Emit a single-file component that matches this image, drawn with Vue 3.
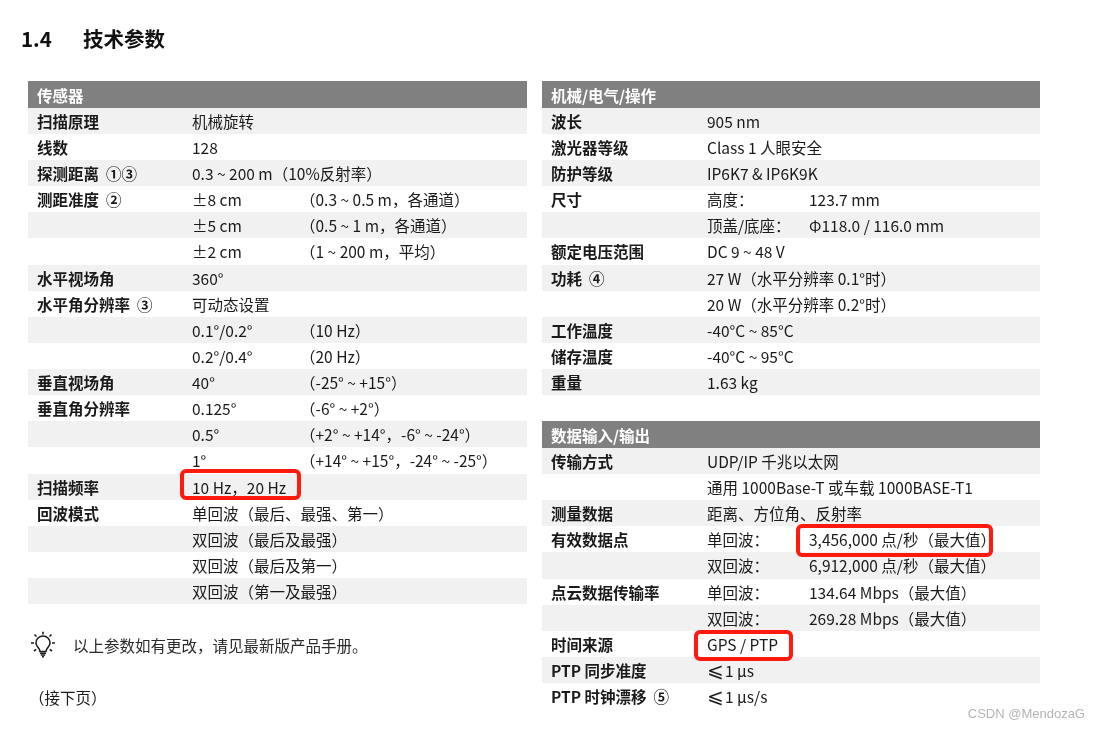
<script setup>
const sensor = [
  ['扫描原理', '机械旋转'],
  ['线数', '128'],
  ['探测距离', '0.3 ~ 200 m（10%反射率）', '', '①③'],
  ['测距准度', '±8 cm', '（0.3 ~ 0.5 m，各通道）', '②'],
  ['', '±5 cm', '（0.5 ~ 1 m，各通道）'],
  ['', '±2 cm', '（1 ~ 200 m，平均）'],
  ['水平视场角', '360°'],
  ['水平角分辨率', '可动态设置', '', '③'],
  ['', '0.1°/0.2°', '（10 Hz）'],
  ['', '0.2°/0.4°', '（20 Hz）'],
  ['垂直视场角', '40°', '（-25° ~ +15°）'],
  ['垂直角分辨率', '0.125°', '（-6° ~ +2°）'],
  ['', '0.5°', '（+2° ~ +14°，-6° ~ -24°）'],
  ['', '1°', '（+14° ~ +15°，-24° ~ -25°）'],
  ['扫描频率', '10 Hz，20 Hz'],
  ['回波模式', '单回波（最后、最强、第一）'],
  ['', '双回波（最后及最强）'],
  ['', '双回波（最后及第一）'],
  ['', '双回波（第一及最强）'],
]
const mech = [
  ['波长', '905 nm'],
  ['激光器等级', 'Class 1 人眼安全'],
  ['防护等级', 'IP6K7 & IP6K9K'],
  ['尺寸', '高度：', '123.7 mm'],
  ['', '顶盖/底座：', 'Φ118.0 / 116.0 mm'],
  ['额定电压范围', 'DC 9 ~ 48 V'],
  ['功耗', '27 W（水平分辨率 0.1°时）', '', '④'],
  ['', '20 W（水平分辨率 0.2°时）'],
  ['工作温度', '-40°C ~ 85°C'],
  ['储存温度', '-40°C ~ 95°C'],
  ['重量', '1.63 kg'],
]
const data = [
  ['传输方式', 'UDP/IP 千兆以太网'],
  ['', '通用 1000Base-T 或车载 1000BASE-T1'],
  ['测量数据', '距离、方位角、反射率'],
  ['有效数据点', '单回波：', '3,456,000 点/秒（最大值）'],
  ['', '双回波：', '6,912,000 点/秒（最大值）'],
  ['点云数据传输率', '单回波：', '134.64 Mbps（最大值）'],
  ['', '双回波：', '269.28 Mbps（最大值）'],
  ['时间来源', 'GPS / PTP'],
  ['PTP 同步准度', '1 µs', '', '', '⩽'],
  ['PTP 时钟漂移', '1 µs/s', '', '⑤', '⩽'],
]
const sections = [
  { title: '机械/电气/操作', rows: mech },
  { title: '数据输入/输出', rows: data },
]
</script>

<template>
  <div class="page">
    <h1 class="title"><span class="num">1.4</span>技术参数</h1>
    <div class="columns">
      <div class="col">
        <section class="table">
          <div class="head">传感器</div>
          <div v-for="(r, i) in sensor" :key="i" class="row left-row">
            <b>{{ r[0] }}<span v-if="r[3]" class="circ">{{ r[3] }}</span></b><span>{{ r[1] }}</span><span v-if="r[2]" class="paren">{{ r[2] }}</span>
          </div>
        </section>
        <div class="note">
          <svg class="bulb" width="28" height="28" viewBox="0 0 28 28" fill="none" stroke="#1c1c1c" stroke-width="1.600">
            <path d="M11 20.500c0-3.500-4-4.500-4-8.500a7 7 0 0 1 14 0c0 4-4 5-4 8.500z" />
            <path d="M11 22.200h6M11.800 24h4.400M13 25.800h2M14 .8v2.700M5.500 3.500l2 2M22.500 3.500l-2 2M2 12h3M23 12h3M5 20l2.200-1.700M23 20l-2.200-1.700" />
          </svg>
          <span>以上参数如有更改，请见最新版产品手册。</span>
        </div>
        <div class="cont">（接下页）</div>
      </div>
      <div class="col">
        <section v-for="s in sections" :key="s.title" class="table stacked">
          <div class="head">{{ s.title }}</div>
          <div v-for="(r, i) in s.rows" :key="i" class="row right-row">
            <b>{{ r[0] }}<span v-if="r[3]" class="circ">{{ r[3] }}</span></b><span><span v-if="r[4]" class="le">{{ r[4] }}</span>{{ r[1] }}</span><span v-if="r[2]">{{ r[2] }}</span>
          </div>
        </section>
      </div>
    </div>
    <i class="mark m1"></i>
    <i class="mark m2"></i>
    <i class="mark m3"></i>
    <div class="wm">CSDN @MendozaG</div>
  </div>
</template>

<style>
html, body { margin: 0; background: #fff; }
</style>

<style scoped>
.page {
  position: relative;
  width: 1100px;
  height: 729px;
  overflow: hidden;
  box-sizing: border-box;
  padding: 23px 60px 0 28px;
  font-family: "Noto Sans CJK SC", "Noto Sans", sans-serif;
  font-size: 15.500px;
  color: #1a1a1a;
  filter: blur(0.25px);
}
.title {
  margin: 0 0 0 -7px;
  height: 30px;
  line-height: 30px;
  font-size: 20.500px;
  font-weight: 700;
  color: #111;
}
.num { display: inline-block; width: 62px; }
.columns {
  display: grid;
  grid-template-columns: 499px 498px;
  gap: 15px;
  margin-top: 28.200px;
}
.head {
  height: 26.600px;
  line-height: 28px;
  padding-left: 9px;
  background: #808080;
  color: #fff;
  font-weight: 700;
}
.row {
  display: grid;
  height: 26.140px;
  line-height: 26.500px;
  padding-left: 9px;
  white-space: nowrap;
}
.left-row { grid-template-columns: 155px 108px 1fr; }
.right-row { grid-template-columns: 156px 102px 1fr; }
.row:nth-child(even) { background: #f1f1f1; }
.row b { font-weight: 700; }
.row .circ {
  margin-left: 7px;
  font-weight: 700;
  font-family: "Noto Sans CJK JP", sans-serif;
  font-feature-settings: "fwid";
}
.le {
  display: inline-block;
  width: 18px;
  font-size: 20px;
  font-weight: 300;
  line-height: 0;
}
.row > span:last-child:nth-child(2) { grid-column: 2 / 4; }
.stacked + .stacked { margin-top: 26.140px; }
.note {
  display: flex;
  align-items: center;
  margin-top: 26.500px;
  height: 28px;
  color: #2a2a2a;
}
.bulb { margin: 0 16px 0 1px; }
.cont { margin-top: 27px; margin-left: 1px; line-height: 22px; }
.mark {
  position: absolute;
  box-sizing: border-box;
  border: 4px solid #ff1a0d;
  border-radius: 6px;
}
.m1 { left: 180px; top: 469px; width: 121px; height: 31px; }
.m2 { left: 796px; top: 524px; width: 197px; height: 33px; }
.m3 { left: 694px; top: 630px; width: 99px; height: 31px; }
.wm {
  position: absolute;
  right: 15px;
  top: 706px;
  font-family: "Liberation Sans", sans-serif;
  font-size: 13px;
  color: #b4b4b4;
}
</style>
